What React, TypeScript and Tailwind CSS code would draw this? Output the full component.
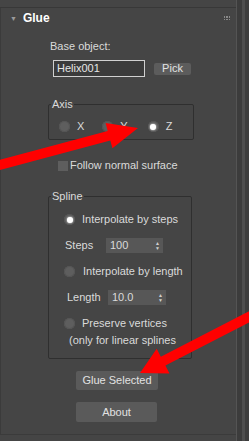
import React from "react";

function Radio({ checked = false }: { checked?: boolean }) {
  return (
    <span className="flex h-[11px] w-[11px] flex-shrink-0 items-center justify-center rounded-full bg-[#5e5e5e] shadow-[inset_0_0_0_1px_#555]">
      {checked && <span className="h-[6px] w-[6px] rounded-full bg-white shadow-[0_0_2px_#fff]" />}
    </span>
  );
}

function Spinner({ value, width }: { value: string; width: string }) {
  return (
    <div className={`flex h-[15px] items-center justify-between bg-[#575757] pl-[4px] pr-[3px] ${width}`}>
      <span>{value}</span>
      <span className="flex flex-col items-center text-[5px] leading-[5px] text-[#cfcfcf]">
        <span>▲</span>
        <span>▼</span>
      </span>
    </div>
  );
}

function Group({ label, className, children }: { label: string; className: string; children: React.ReactNode }) {
  return (
    <div className={`relative rounded-[2px] border border-[#2f2f2f] ${className}`}>
      <span className="absolute -top-[7px] left-[2px] bg-[#454545] px-[1px] leading-[13px]">{label}</span>
      {children}
    </div>
  );
}

export default function App() {
  return (
    <div
      className="relative flex h-[441px] w-[249px] overflow-hidden bg-[#454545] text-[11px] leading-[13px] text-[#dadada]"
      style={{ fontFamily: '"Liberation Sans", Arial, sans-serif' }}
    >
      <div className="flex w-[236px] flex-col">
        <div className="h-[8px] border-b border-[#383838]" />
        <div className="flex h-[427px] flex-col border-b border-l border-[#3b3b3b]">
          {/* header */}
          <div className="flex h-[20px] items-center">
            <span className="ml-[9px] text-[7px] text-[#9a9a9a]">▼</span>
            <span className="ml-[6px] text-[12px] font-bold text-white">Glue</span>
            <span className="ml-auto mr-[6px] grid grid-cols-3 gap-[1px]">
              {Array.from({ length: 6 }).map((_, i) => (
                <span key={i} className="h-[1.5px] w-[1.5px] bg-[#8a8a8a]" />
              ))}
            </span>
          </div>

          <div className="ml-[49px] mt-[12px]">Base object:</div>
          <div className="ml-[52px] mt-[7px] flex items-center gap-[9px]">
            <div className="flex h-[17px] w-[92px] items-center border border-[#d0d0d0] bg-[#3b3b3b] pl-[3px] text-[#e6e6e6]">
              Helix001
            </div>
            <div className="flex h-[12px] w-[37px] items-center justify-center rounded-[2px] bg-[#5c5c5c] text-[#e2e2e2]">
              Pick
            </div>
          </div>

          <Group label="Axis" className="ml-[47px] mt-[27px] h-[36px] w-[146px]">
            <div className="mt-[15px] flex items-center">
              <span className="ml-[10px]"><Radio /></span>
              <span className="ml-[7px]">X</span>
              <span className="ml-[18px]"><Radio /></span>
              <span className="ml-[7px]">Y</span>
              <span className="ml-[20px]"><Radio checked /></span>
              <span className="ml-[7px]">Z</span>
            </div>
          </Group>

          <div className="ml-[57px] mt-[19px] flex items-center gap-[2px]">
            <span className="h-[10px] w-[10px] bg-[#5e5e5e]" />
            <span>Follow normal surface</span>
          </div>

          <Group label="Spline" className="ml-[47px] mt-[24px] h-[163px] w-[144px]">
            <div className="flex flex-col">
              <div className="ml-[15px] mt-[16px] flex items-center gap-[7px]">
                <Radio checked />
                <span>Interpolate by steps</span>
              </div>
              <div className="ml-[16px] mt-[12px] flex items-center">
                <span className="w-[41px]">Steps</span>
                <Spinner value="100" width="w-[57px]" />
              </div>
              <div className="ml-[15px] mt-[12px] flex items-center gap-[8px]">
                <Radio />
                <span>Interpolate by length</span>
              </div>
              <div className="ml-[18px] mt-[12px] flex items-center">
                <span className="w-[41px]">Length</span>
                <Spinner value="10.0" width="w-[58px]" />
              </div>
              <div className="ml-[15px] mt-[12px] flex items-center gap-[7px]">
                <Radio />
                <span>Preserve vertices</span>
              </div>
              <div className="ml-[20px] mt-[4px]">(only for linear splines</div>
            </div>
          </Group>

          <div className="ml-[75px] mt-[12px] flex h-[19px] w-[82px] items-center justify-center rounded-[2px] bg-[#5a5a5a] text-[#e2e2e2]">
            Glue Selected
          </div>
          <div className="ml-[75px] mt-[12px] flex h-[20px] w-[81px] items-center justify-center rounded-[2px] bg-[#5a5a5a] text-[#e2e2e2]">
            About
          </div>
        </div>
      </div>

      {/* scroll gutter */}
      <div className="flex w-[13px]">
        <div className="w-[1px] bg-[#545454]" />
        <div className="w-[5px] bg-[#3c3c3c]" />
        <div className="w-[3px] bg-[#4e4e4e]" />
        <div className="flex-1 bg-[#3d3d3d]" />
      </div>

      {/* red annotation arrows */}
      <svg className="pointer-events-none absolute left-0 top-0" width="249" height="441" viewBox="0 0 249 441">
        <polygon
          fill="#f00"
          points="-5.6,171.5 -8.2,161.9 107.7,130.9 105.6,123.1 138,128 112.4,148.3 110.3,140.5"
        />
        <polygon
          fill="#f00"
          points="271.2,311.1 266.6,302.3 160.8,356.7 156.7,348.7 140,373 169.5,373.5 165.4,365.5"
        />
      </svg>
    </div>
  );
}
